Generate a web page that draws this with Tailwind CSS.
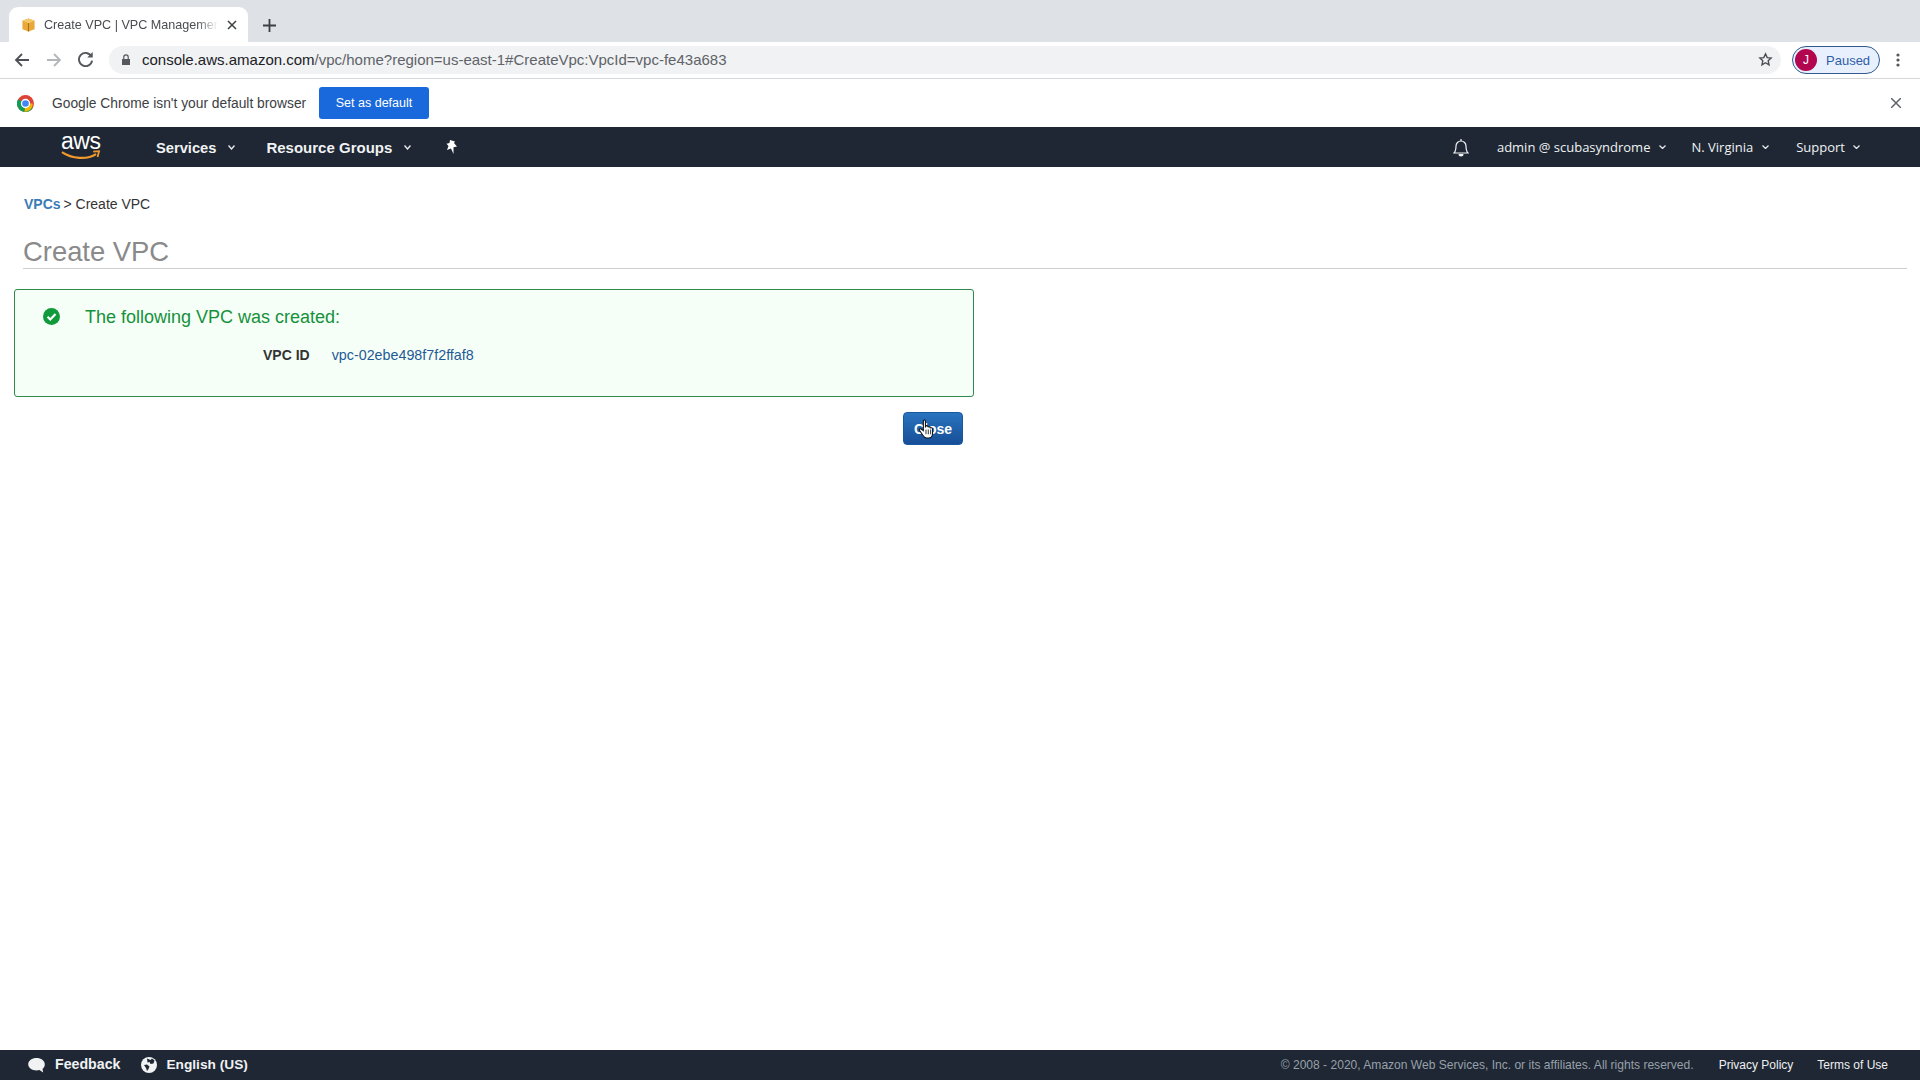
<!doctype html>
<html><head><meta charset="utf-8"><script src="https://cdn.jsdelivr.net/npm/@tailwindcss/browser@4"></script></head>
<body class="bg-white">
<div class="relative flex h-[1080px] w-[1920px] flex-col overflow-hidden font-['Liberation_Sans',sans-serif]">
  <!-- tab strip -->
  <div class="flex h-[42px] items-end bg-[#dee1e6] pl-[9px]">
    <div class="flex h-[35px] w-[239px] items-center rounded-t-[9px] bg-white pl-[12px]">
      <svg class="h-[16px] w-[15px] shrink-0" viewBox="0 0 16 16"><path d="M1.500 3.500 8 1l6.500 2.500v9L8 15l-6.500-2.500z" fill="#e8a93a"/><path d="M8 1l6.500 2.500L8 6 1.500 3.500z" fill="#f4c869"/><path d="M7.400 6h1.200v9H7.400z" fill="#a9711c"/></svg>
      <span class="ml-[8px] w-[174px] translate-y-[1px] overflow-hidden whitespace-nowrap text-[12.600px] text-[#4a4c50] [mask-image:linear-gradient(to_right,black_88%,transparent)]">Create VPC | VPC Management</span>
      <svg class="ml-[9px] h-[10px] w-[10px]" viewBox="0 0 10 10"><path d="M1 1l8 8M9 1l-8 8" stroke="#3c4043" stroke-width="1.500"/></svg>
    </div>
    <svg class="mb-[10px] ml-[15px] h-[13px] w-[13px]" viewBox="0 0 13 13"><path d="M6.500 0v13M0 6.500h13" stroke="#3c4043" stroke-width="1.800"/></svg>
  </div>
  <!-- toolbar -->
  <div class="flex h-[37px] items-center border-b border-[#d5d7da] pb-[1px] pl-[14px]">
    <svg class="h-[16px] w-[16px]" viewBox="0 0 16 16"><path d="M15 8H2M8 2 2 8l6 6" fill="none" stroke="#4d5054" stroke-width="1.800"/></svg>
    <svg class="ml-[16px] h-[16px] w-[16px]" viewBox="0 0 16 16"><path d="M1 8h13M8 2l6 6-6 6" fill="none" stroke="#b4b6b9" stroke-width="1.800"/></svg>
    <svg class="ml-[15px] h-[17px] w-[17px]" viewBox="0 0 16 16"><path d="M13.500 5A6.200 6.200 0 1 0 14.200 9" fill="none" stroke="#55585c" stroke-width="1.800"/><path d="M14.800 1v5.200H9.600z" fill="#55585c"/></svg>
    <div class="ml-[15px] flex h-[28px] w-[1672px] items-center rounded-full bg-[#f0f2f4] pl-[12px]">
      <svg class="h-[11px] w-[10px]" viewBox="0 0 10 11"><path d="M1 5h8v6H1z" fill="#55585c"/><path d="M2.800 5V3a2.200 2.200 0 0 1 4.400 0v2" fill="none" stroke="#55585c" stroke-width="1.200"/></svg>
      <span class="ml-[11px] translate-y-[1px] whitespace-nowrap text-[15px] text-[#202124]">console.aws.amazon.com<span class="text-[#5f6368]">/vpc/home?region=us-east-1#CreateVpc:VpcId=vpc-fe43a683</span></span>
      <svg class="ml-auto mr-[8px] h-[15px] w-[15px]" viewBox="0 0 24 24"><path d="m12 3 2.700 6 6.300.700-4.700 4.300 1.300 6.500L12 17.200 6.400 20.500 7.700 14 3 9.700 9.300 9z" fill="none" stroke="#4a4d51" stroke-width="2.200"/></svg>
    </div>
    <div class="ml-[11px] flex h-[28px] w-[88px] items-center rounded-full border border-[#315a8e] bg-[#e8f0fe] pl-[2px]">
      <span class="flex h-[22px] w-[22px] items-center justify-center rounded-full bg-[#b2064f] text-[12px] text-white">J</span>
      <span class="ml-[9px] translate-y-[0.5px] text-[13px] text-[#2f5da5]">Paused</span>
    </div>
    <svg class="ml-[16px] h-[14px] w-[4px]" viewBox="0 0 4 14"><circle cx="2" cy="2" r="1.600" fill="#55585c"/><circle cx="2" cy="7" r="1.600" fill="#55585c"/><circle cx="2" cy="12" r="1.600" fill="#55585c"/></svg>
  </div>
  <!-- infobar -->
  <div class="flex h-[48px] items-center pl-[17px]">
    <svg class="h-[17px] w-[17px]" viewBox="0 0 32 32"><circle cx="16" cy="16" r="16" fill="#db4437"/><path d="M16 16 2.100 24A16 16 0 0 1 2.100 8z" fill="#0f9d58"/><path d="M16 16 29.900 24A16 16 0 0 1 2.100 24z" fill="#0f9d58"/><path d="M16 16h13.900A16 16 0 0 1 14 32z" fill="#f4b400"/><circle cx="16" cy="16" r="7.500" fill="#4285f4" stroke="#fff" stroke-width="2.500"/></svg>
    <span class="ml-[18px] w-[254px] translate-y-[1px] whitespace-nowrap text-[13.800px] text-[#3c4043]">Google Chrome isn't your default browser</span>
    <span class="ml-[13px] flex h-[32px] w-[110px] items-center justify-center rounded-[3px] bg-[#1a69dc] text-[12.500px] text-white">Set as default</span>
    <svg class="ml-auto mr-[19px] h-[10px] w-[10px]" viewBox="0 0 10 10"><path d="M0 0l10 10M10 0 0 10" stroke="#5f6368" stroke-width="1.500"/></svg>
  </div>
  <!-- nav -->
  <div class="flex h-[40px] items-center bg-[#1e2733] pl-[61px] text-white">
    <div class="relative h-[34px] w-[40px] shrink-0">
      <span class="absolute left-0 top-[-4px] text-[23px] leading-[30px] tracking-[-0.500px]">aws</span>
      <svg class="absolute left-0 top-[20px] h-[11px] w-[40px]" viewBox="0 0 41 11"><path d="M1 2c10 7 26 8 35 2" fill="none" stroke="#f39a2c" stroke-width="2.200"/><path d="M33 1.500l6-.5-1.500 6" fill="none" stroke="#f39a2c" stroke-width="1.800"/></svg>
    </div>
    <span class="ml-[55px] translate-y-[1px] text-[14.700px] font-bold text-[#f0f2f4]">Services</span>
    <svg class="ml-[12px] h-[5px] w-[7px]" viewBox="0 0 7 5"><path d="M.5.500 3.500 4l3-3.500" fill="none" stroke="#e6e8ea" stroke-width="1.400"/></svg>
    <span class="ml-[31px] translate-y-[1px] text-[15px] font-bold text-[#f0f2f4]">Resource Groups</span>
    <svg class="ml-[12px] h-[5px] w-[7px]" viewBox="0 0 7 5"><path d="M.5.500 3.500 4l3-3.500" fill="none" stroke="#e6e8ea" stroke-width="1.400"/></svg>
    <svg class="ml-[35px] h-[14px] w-[12px]" viewBox="0 0 12 14"><path d="M4 0 9 1.500 8 3l3 3.500-3.500.8L7.500 14 5 8.500 1 10l1.500-4L.5 3.800 3.500 3z" fill="#fff"/></svg>
    <svg class="ml-auto h-[19px] w-[16px]" viewBox="0 0 16 19"><path d="M1 15c2-2 2-4 2-7a5 5 0 0 1 10 0c0 3 0 5 2 7z" fill="none" stroke="#f0f2f4" stroke-width="1.200"/><path d="M8 1v2" stroke="#f0f2f4" stroke-width="1.200"/><path d="M5.500 16h5a2.500 2.500 0 0 1-5 0" fill="#f0f2f4"/></svg>
    <span class="ml-[28px] translate-y-[1px] whitespace-nowrap font-['Open_Sans',sans-serif] text-[13px] text-[#f0f2f4]">admin @ scubasyndrome</span>
    <svg class="ml-[9px] h-[4px] w-[7px]" viewBox="0 0 7 4"><path d="M.5.500 3.500 3.500l3-3" fill="none" stroke="#e6e8ea" stroke-width="1.300"/></svg>
    <span class="ml-[25px] translate-y-[1px] whitespace-nowrap font-['Open_Sans',sans-serif] text-[13px] text-[#f0f2f4]">N. Virginia</span>
    <svg class="ml-[9px] h-[4px] w-[7px]" viewBox="0 0 7 4"><path d="M.5.500 3.500 3.500l3-3" fill="none" stroke="#e6e8ea" stroke-width="1.300"/></svg>
    <span class="ml-[27px] translate-y-[1px] whitespace-nowrap font-['Open_Sans',sans-serif] text-[13px] text-[#f0f2f4]">Support</span>
    <svg class="ml-[8px] mr-[60px] h-[4px] w-[7px]" viewBox="0 0 7 4"><path d="M.5.500 3.500 3.500l3-3" fill="none" stroke="#e6e8ea" stroke-width="1.300"/></svg>
  </div>
  <!-- main -->
  <main class="flex-1 pl-[14px] pr-[13px]">
    <div class="ml-[10px] mt-[27px] text-[14px] leading-[20px] text-[#333]"><span class="font-bold text-[#3b7cb5]">VPCs</span><span class="-ml-[1px]"> &gt; Create VPC</span></div>
    <h1 class="ml-[9px] mt-[14px] h-[41px] border-b border-[#cfcfcf] pt-[8px] text-[27.400px] leading-[32px] text-[#8a8a8a]">Create VPC</h1>
    <div class="mt-[20px] h-[108px] w-[960px] rounded-[3px] border border-[#2e8a4c] bg-[#f6fff7]">
      <div class="relative flex items-center pl-[28px] pt-[16px]">
        <svg class="h-[17px] w-[17px] -translate-y-[1px]" viewBox="0 0 17 17"><circle cx="8.500" cy="8.500" r="8.500" fill="#119a3c"/><path d="M4.500 8.700 7.300 11.500 12.500 6" fill="none" stroke="#fff" stroke-width="2.200"/></svg>
        <span class="ml-[25px] text-[18px] leading-[22px] text-[#15913b]">The following VPC was created:</span>
      </div>
      <div class="mt-[17px] flex items-center text-[14px] leading-[20px]">
        <span class="ml-[248px] font-bold text-[#333]">VPC ID</span>
        <span class="ml-[22px] text-[14.300px] text-[#1f5a96]">vpc-02ebe498f7f2ffaf8</span>
      </div>
    </div>
    <div class="ml-[889px] mt-[15px] flex h-[33px] w-[60px] items-center justify-center rounded-[4px] border border-[#17589f] bg-linear-to-b from-[#2a74bf] to-[#174f97] pt-[1px] text-[14px] font-bold text-white">Close</div>
  </main>
  <!-- footer -->
  <footer class="flex h-[30px] items-center bg-[#1e2733] pl-[28px] pr-[32px]">
    <svg class="h-[17px] w-[17px]" viewBox="0 0 17 17"><path d="M8.500 1C13 1 16.800 3.700 16.800 7.300c0 2-.9 3.500-2.300 4.600l.7 3.600-3.800-2.400c-1 .3-1.800.4-2.900.4C4 13.500.2 10.900.2 7.300S4 1 8.500 1z" fill="#f0f2f4"/></svg>
    <span class="ml-[10px] text-[14.200px] font-bold text-[#f0f2f4]">Feedback</span>
    <svg class="ml-[21px] h-[16px] w-[16px]" viewBox="0 0 16 16"><circle cx="8" cy="8" r="8" fill="#f0f2f4"/><path d="M6 1.500 9.500 3 11 1.500l2.500 2-1 3-3 .5-1-2-2 .5zM3 8l3-.5 2.500 2-1 2.500-1.500 2-1-3z" fill="#1e2733"/></svg>
    <span class="ml-[9px] text-[13.700px] font-bold text-[#f0f2f4]">English (US)</span>
    <span class="ml-auto text-[12.050px] text-[#98a0aa]">© 2008 - 2020, Amazon Web Services, Inc. or its affiliates. All rights reserved.</span>
    <span class="ml-[25px] text-[12px] text-[#eef0f2]">Privacy Policy</span>
    <span class="ml-[24px] text-[12px] text-[#eef0f2]">Terms of Use</span>
  </footer>
  <!-- pointer cursor -->
  <svg class="absolute left-[918px] top-[419px] h-[20px] w-[17px]" viewBox="0 0 16 19"><path d="M5 1.500c1-1 2-.5 2 .8V8l.5-1.500c1.200-.5 1.800 0 1.800.8l.3.200c1-.5 1.800 0 1.800.8l.3.200c1.200-.5 2 0 2 1.200V14c0 2-1.300 4-3.500 4H8c-1.500 0-2.500-1-3.500-2.500L1.500 11c-.7-1.300.5-2.200 1.500-1.500L5 11z" fill="#fff" stroke="#111" stroke-width="1"/><path d="M7.500 10v4.500M9.700 10v4.500M11.900 10v4.500" stroke="#111" stroke-width=".8"/></svg>
</div>
</body></html>
